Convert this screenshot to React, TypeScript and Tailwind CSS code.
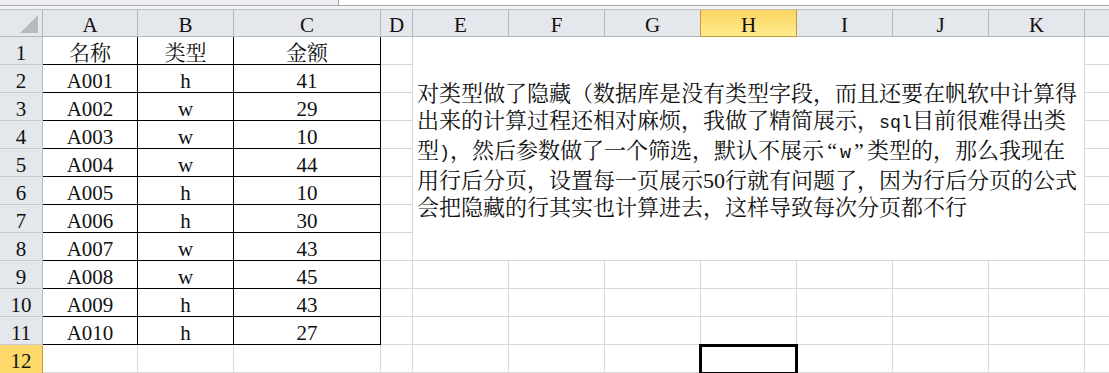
import React from "react";

const data: string[][] = [
  ["名称", "类型", "金额"],
  ["A001", "h", "41"],
  ["A002", "w", "29"],
  ["A003", "w", "10"],
  ["A004", "w", "44"],
  ["A005", "h", "10"],
  ["A006", "h", "30"],
  ["A007", "w", "43"],
  ["A008", "w", "45"],
  ["A009", "h", "43"],
  ["A010", "h", "27"],
];

const colLetters = ["A", "B", "C", "D", "E", "F", "G", "H", "I", "J", "K"];

const Mono = ({ children }: { children: React.ReactNode }) => (
  <span className="font-['Liberation_Mono',monospace] text-[18.3px]">{children}</span>
);

const Quote = ({ children }: { children: React.ReactNode }) => (
  <span className="inline-block w-[16px] text-center">{children}</span>
);

export default function App() {
  const cells: React.ReactNode[] = [];

  cells.push(
    <div key="corner" className="relative bg-[#e4e7eb] border-r border-b border-[#b3b8bf]">
      <svg className="absolute left-0 top-0" width="43" height="27" viewBox="0 0 43 27">
        <polygon points="20,23 38,23 38,5" fill="#b7bbc1" />
      </svg>
    </div>
  );
  colLetters.forEach((c) => {
    if (c === "H") {
      cells.push(
        <div
          key={"h" + c}
          className="flex items-center justify-center pt-[4px] bg-linear-to-b from-[#fdd462] to-[#feec8e] border-r border-b border-l border-[#c39b3c] -ml-px"
        >
          {c}
        </div>
      );
    } else {
      cells.push(
        <div
          key={"h" + c}
          className="flex items-center justify-center pt-[4px] bg-[#e4e7eb] border-r border-b border-[#b3b8bf]"
        >
          {c}
        </div>
      );
    }
  });
  cells.push(<div key="hL" className="bg-[#e4e7eb] border-b border-[#b3b8bf]" />);

  for (let r = 1; r <= 12; r++) {
    if (r === 12) {
      cells.push(
        <div
          key={"r" + r}
          className="flex items-center justify-center pt-[5px] bg-[#fdd96c] border-r border-[#c39b3c]"
        >
          {r}
        </div>
      );
    } else {
      cells.push(
        <div
          key={"r" + r}
          className="flex items-center justify-center pt-[5px] bg-[#e4e7eb] border-r border-b border-r-[#b3b8bf] border-b-[#c6cad0]"
        >
          {r}
        </div>
      );
    }
    for (let c = 0; c < 12; c++) {
      const key = "c" + r + "-" + c;
      if (c < 3 && r <= 11) {
        cells.push(
          <div
            key={key}
            className="flex items-center justify-center border-r border-b border-black pt-[5px]"
          >
            {data[r - 1][c]}
          </div>
        );
      } else if (c >= 4 && c <= 10 && r <= 8) {
        if (c === 4 && r === 1) {
          cells.push(
            <div
              key="merged"
              className="col-span-7 row-span-8 flex flex-col justify-center pl-[4px] pt-[3px] border-r border-b border-[#d9d9d9] text-[22px] leading-[27px] font-['Liberation_Serif','Noto_Serif_CJK_SC','Noto_Sans_CJK_SC',serif]"
            >
              <div className="whitespace-nowrap">对类型做了隐藏（数据库是没有类型字段，而且还要在帆软中计算得</div>
              <div className="whitespace-nowrap">
                出来的计算过程还相对麻烦，我做了精简展示，<Mono>sql</Mono>目前很难得出类
              </div>
              <div className="whitespace-nowrap">
                型<Mono>)</Mono>，然后参数做了一个筛选，默认不展示<Quote>“</Quote>
                <Mono>w</Mono>
                <Quote>”</Quote>类型的，那么我现在
              </div>
              <div className="whitespace-nowrap">用行后分页，设置每一页展示50行就有问题了，因为行后分页的公式</div>
              <div className="whitespace-nowrap">会把隐藏的行其实也计算进去，这样导致每次分页都不行</div>
            </div>
          );
        }
      } else if (r === 12 && c === 7) {
        cells.push(
          <div key={key} className="relative border-r border-b border-[#d9d9d9]">
            <div className="absolute -left-[2px] -top-px w-[99px] h-[31px] border-[3px] border-black" />
          </div>
        );
      } else {
        cells.push(
          <div
            key={key}
            className={c === 11 ? "border-b border-[#d9d9d9]" : "border-r border-b border-[#d9d9d9]"}
          />
        );
      }
    }
  }

  return (
    <div className="w-[1109px] h-[373px] overflow-hidden bg-white text-[#111] text-[21px] font-['Liberation_Serif','Noto_Serif_CJK_SC','Noto_Sans_CJK_SC',serif]">
      <div className="flex h-[5px]">
        <div className="w-[339px] bg-[#eceef1] border-r border-[#a8a8a8]" />
        <div className="flex-1 bg-white" />
      </div>
      <div className="h-px bg-[#a9a9a9]" />
      <div className="h-[3px] bg-[#f3f3f3]" />
      <div className="h-px bg-[#bfbfbf]" />
      <div className="grid grid-cols-[43px_95px_96px_147px_32px_96px_96px_96px_96px_96px_96px_96px_1fr] grid-rows-[27px_repeat(12,28px)] leading-none">
        {cells}
      </div>
    </div>
  );
}
